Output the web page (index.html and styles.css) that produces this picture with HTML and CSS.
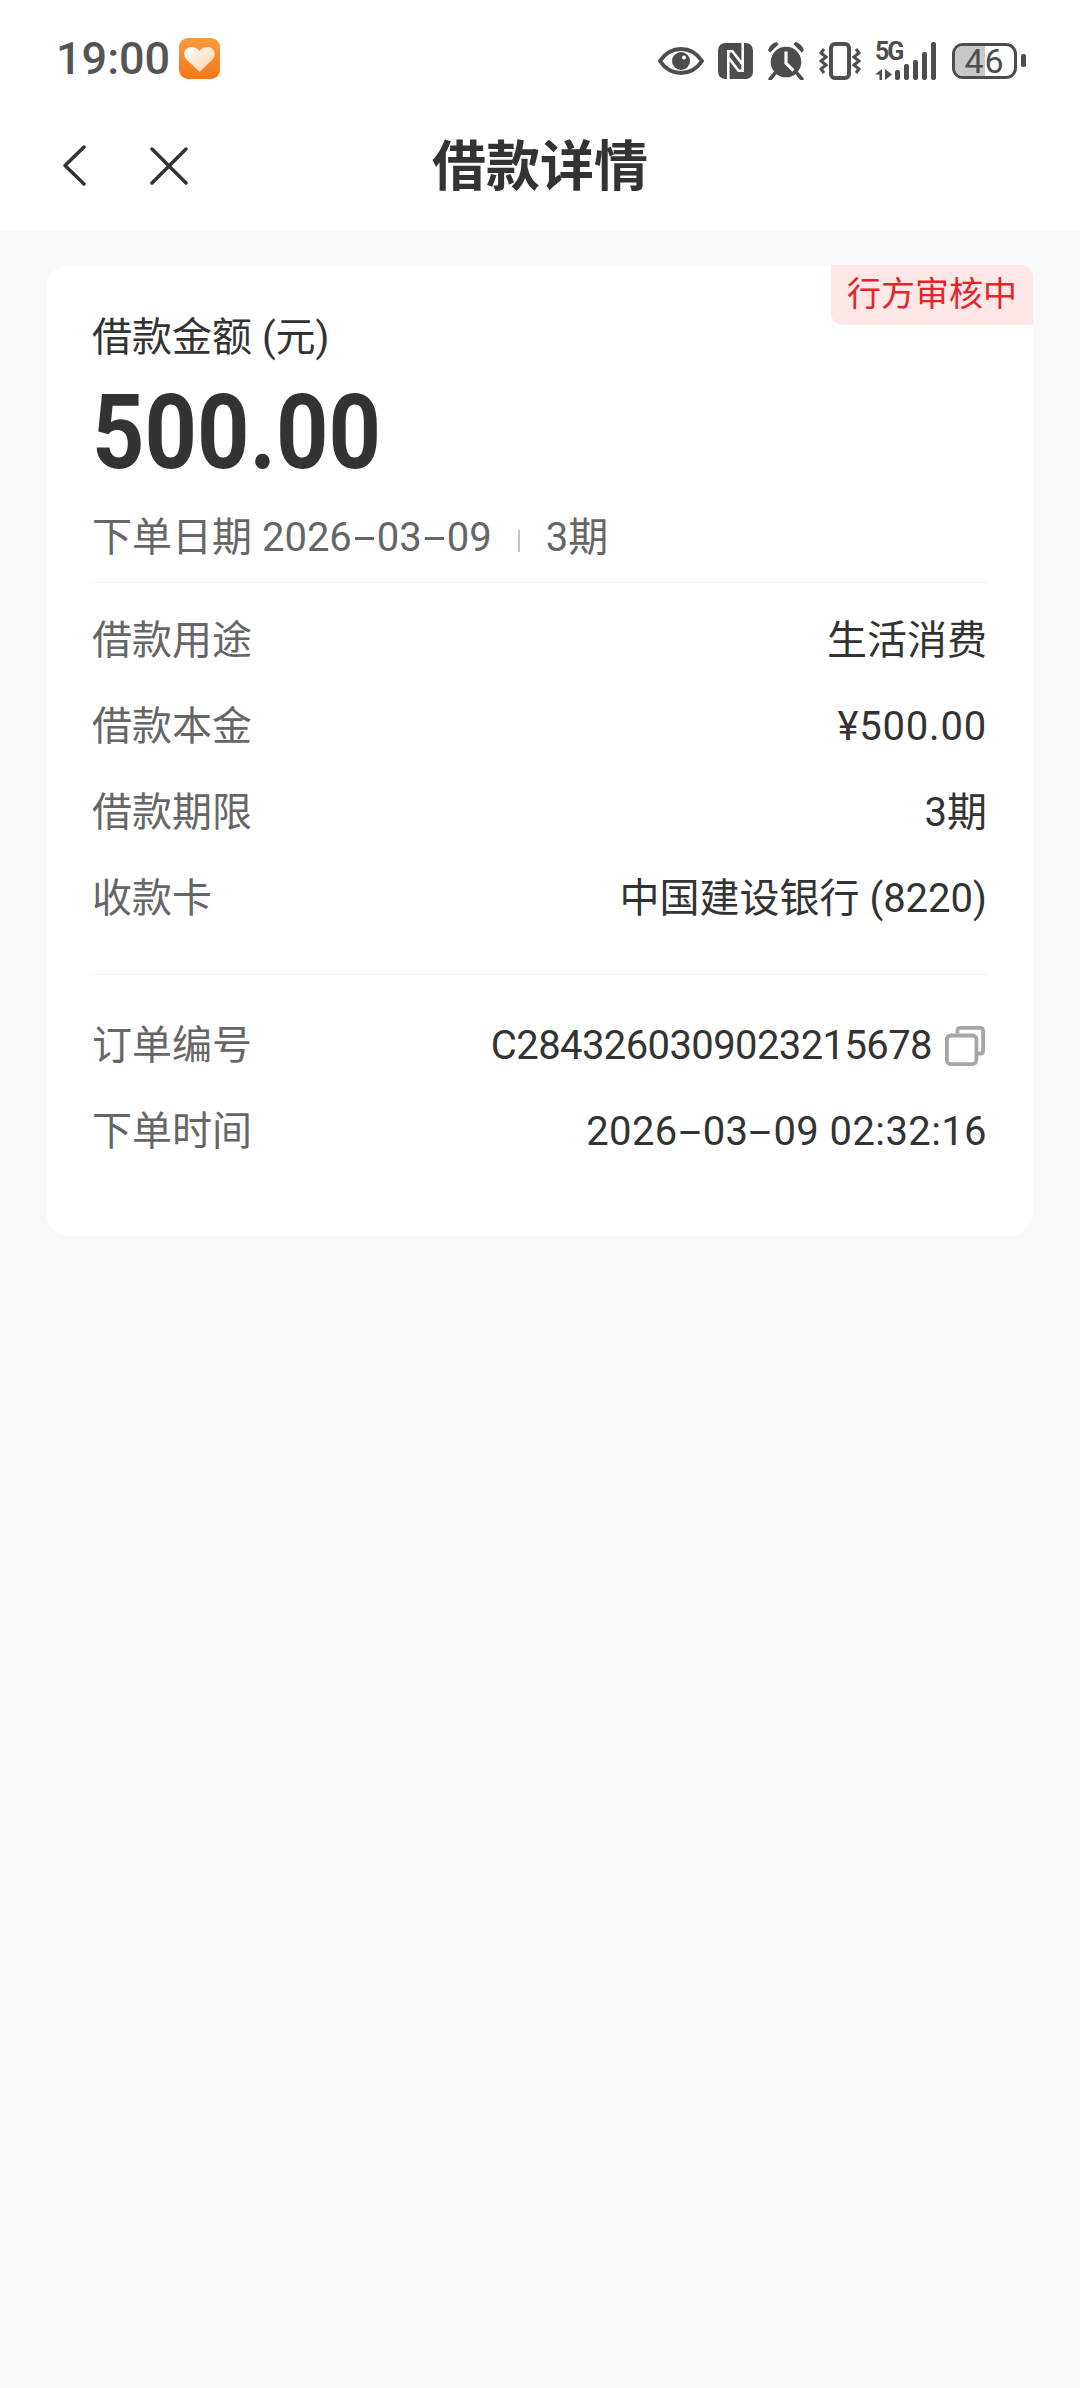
FILE: index.html
```html
<!DOCTYPE html>
<html lang="zh-CN">
<head>
  <meta charset="UTF-8">
  <title>借款详情</title>
  <link rel="stylesheet" href="styles.css">
</head>
<body>
  <div class="status-bar">
    <div class="status-left">
      <span class="time">19:00</span>
      <svg class="app-icon" width="42" height="42" viewBox="0 0 42 42">
        <defs>
          <linearGradient id="orange" x1="0" y1="0" x2="0" y2="1">
            <stop offset="0" stop-color="#fb9a3c"/>
            <stop offset="1" stop-color="#f9761a"/>
          </linearGradient>
          <linearGradient id="heart" x1="0" y1="0" x2="1" y2="1">
            <stop offset="0" stop-color="#fff"/>
            <stop offset="1" stop-color="#fbcfa4"/>
          </linearGradient>
        </defs>
        <rect width="41" height="41" rx="9" fill="url(#orange)"/>
        <path d="M20.500 34 L7 21 C3 16 6 9 12.500 9 C16 9 18.500 10.500 20.500 13 C22.500 10.500 25 9 28.500 9 C35 9 38 16 34 21 Z" fill="url(#heart)"/>
      </svg>
    </div>
    <div class="status-right">
      <svg width="46" height="30" viewBox="0 0 46 30">
        <path d="M2 15 C8 6 15 3 23 3 C31 3 38 6 44 15 C38 24 31 27 23 27 C15 27 8 24 2 15 Z" fill="none" stroke="#4d4d4d" stroke-width="4"/>
        <circle cx="23" cy="15" r="9" fill="#4d4d4d"/>
        <circle cx="26" cy="11.500" r="2" fill="#fff"/>
      </svg>
      <svg width="35" height="36" viewBox="0 0 34 35">
        <rect width="34" height="35" rx="7" fill="#4d4d4d"/>
        <path d="M10 35 V8 H14 L24 21 M24 0 V27 H20 L10 14" fill="none" stroke="#fff" stroke-width="2.500"/>
      </svg>
      <svg width="38" height="39" viewBox="0 0 36 37">
        <circle cx="18" cy="20" r="14.500" fill="#4d4d4d"/>
        <path d="M18 10 V21 L25 28" fill="none" stroke="#fff" stroke-width="3"/>
        <path d="M1 9 C2 5 5 2 9 1 L11 3 L3 11 Z M35 9 C34 5 31 2 27 1 L25 3 L33 11 Z" fill="#4d4d4d"/>
        <path d="M8 30 L3 36 M28 30 L33 36" stroke="#4d4d4d" stroke-width="3.500" stroke-linecap="round"/>
      </svg>
      <svg width="42" height="38" viewBox="0 0 42 38">
        <rect x="12" y="2" width="18" height="34" rx="4" fill="none" stroke="#4d4d4d" stroke-width="4"/>
        <path d="M5 7 L2 11 L7 15 L2 19 L7 23 L2 27 L5 31" fill="none" stroke="#4d4d4d" stroke-width="3"/>
        <path d="M37 7 L40 11 L35 15 L40 19 L35 23 L40 27 L37 31" fill="none" stroke="#4d4d4d" stroke-width="3"/>
      </svg>
      <div class="signal">
        <div class="net">
          <span class="net-label">5G</span>
          <svg width="18" height="11" viewBox="0 0 18 11">
            <path d="M7 0 V11 H4.500 V5.500 H0 Z M10 0 L17 5.500 L10 11 Z" fill="#4d4d4d"/>
          </svg>
        </div>
        <div class="bars">
          <i class="bar b0"></i>
          <i class="bar b1"></i>
          <i class="bar b2"></i>
          <i class="bar b3"></i>
          <i class="bar b4"></i>
        </div>
      </div>
      <div class="battery">
        <div class="battery-body">
          <div class="battery-fill"></div>
          <span class="battery-num">46</span>
        </div>
        <div class="battery-cap"></div>
      </div>
    </div>
  </div>

  <div class="nav-bar">
    <div class="nav-icons">
      <svg width="24" height="42" viewBox="0 0 24 42">
        <path d="M22 2 L3 20.500 L22 39" fill="none" stroke="#333" stroke-width="3.500" stroke-linecap="round" stroke-linejoin="round"/>
      </svg>
      <svg width="38" height="38" viewBox="0 0 38 38">
        <path d="M2 2 L36 36 M36 2 L2 36" fill="none" stroke="#333" stroke-width="3.500" stroke-linecap="round"/>
      </svg>
    </div>
    <h1 class="nav-title">借款详情</h1>
  </div>

  <div class="strip"></div>

  <div class="card">
    <div class="badge">行方审核中</div>
    <div class="amount-label">借款金额 (元)</div>
    <div class="amount">500.00</div>
    <div class="order-meta">
      <span>下单日期 2026<span class="dash">-</span>03<span class="dash">-</span>09</span>
      <i class="meta-sep"></i>
      <span>3期</span>
    </div>

    <div class="group first">
      <div class="row"><span class="key">借款用途</span><span class="val">生活消费</span></div>
      <div class="row"><span class="key">借款本金</span><span class="val price">¥500.00</span></div>
      <div class="row"><span class="key">借款期限</span><span class="val">3期</span></div>
      <div class="row"><span class="key">收款卡</span><span class="val">中国建设银行 (8220)</span></div>
    </div>

    <div class="group second">
      <div class="row">
        <span class="key">订单编号</span>
        <span class="val">
          <span class="order-no">C2843260309023215678</span>
          <svg class="copy" width="40" height="40" viewBox="0 0 42 42">
            <path d="M13 8 V5 C13 3 14 2 16 2 H37 C39 2 40 3 40 5 V26 C40 28 39 29 37 29 H33" fill="none" stroke="#a6a6a6" stroke-width="4"/>
            <rect x="2" y="10" width="31" height="30" rx="4" fill="none" stroke="#a6a6a6" stroke-width="4"/>
          </svg>
        </span>
      </div>
      <div class="row">
        <span class="key">下单时间</span>
        <span class="val"><span class="stamp">2026<span class="dash">-</span>03<span class="dash">-</span>09 02:32:16</span></span>
      </div>
    </div>
  </div>
</body>
</html>
```

FILE: styles.css
```css
body {
  margin: 0;
  height: 2388px;
  overflow: hidden;
  background: #f9f9fa;
  font-family: Roboto, "Noto Sans CJK SC", sans-serif;
  color: #333;
}
.status-bar {
  height: 80px;
  padding: 0 54px 0 56px;
  background: #fff;
  display: flex;
  justify-content: space-between;
  align-items: flex-end;
}
.status-left {
  display: flex;
  align-items: center;
  gap: 9px;
}
.time {
  font-size: 45px;
  line-height: 42px;
  font-weight: 500;
  color: #555;
}
.status-right {
  display: flex;
  align-items: center;
  gap: 14px;
}
.signal {
  display: flex;
  align-items: flex-end;
  height: 38px;
}
.net {
  display: flex;
  flex-direction: column;
  justify-content: space-between;
  height: 38px;
  width: 20px;
}
.net-label {
  font-size: 25px;
  line-height: 20px;
  font-weight: 700;
  letter-spacing: -2px;
  white-space: nowrap;
  color: #4d4d4d;
}
.bars {
  display: flex;
  align-items: flex-end;
  gap: 4px;
}
.bar {
  width: 5px;
  background: #4d4d4d;
  border-radius: 2px;
}
.b0 { height: 10px; }
.b1 { height: 16px; }
.b2 { height: 20px; }
.b3 { height: 28px; }
.b4 { height: 38px; }
.battery {
  display: flex;
  align-items: center;
  gap: 4px;
  margin-left: 2px;
}
.battery-body {
  position: relative;
  box-sizing: border-box;
  width: 65px;
  height: 36px;
  border: 3px solid #4d4d4d;
  border-radius: 11px;
  display: flex;
  align-items: center;
  justify-content: center;
}
.battery-fill {
  position: absolute;
  left: 0;
  top: 0;
  bottom: 0;
  width: 50%;
  background: #c8c8c8;
  border-radius: 8px 0 0 8px;
}
.battery-num {
  position: relative;
  font-size: 34px;
  line-height: 36px;
  letter-spacing: 1px;
  color: #4d4d4d;
}
.battery-cap {
  width: 5px;
  height: 13px;
  background: #4d4d4d;
  border-radius: 2px;
}
.nav-bar {
  position: relative;
  box-sizing: border-box;
  height: 150px;
  padding-top: 15px;
  background: #fff;
  display: flex;
  align-items: center;
  justify-content: center;
}
.nav-icons {
  position: absolute;
  left: 62px;
  top: 65px;
  display: flex;
  align-items: center;
  gap: 64px;
}
.nav-title {
  margin: 0;
  font-size: 54px;
  font-weight: 700;
  color: #333;
}
.strip {
  height: 35px;
  background: linear-gradient(#f8fafe, #f8f9fb);
}
.card {
  position: relative;
  margin: 0 47px 0 46px;
  height: 971px;
  box-sizing: border-box;
  padding: 46px 46px 0;
  background: #fff;
  border-radius: 24px;
}
.badge {
  position: absolute;
  top: 0;
  right: 0;
  width: 202px;
  height: 60px;
  line-height: 59px;
  text-align: center;
  font-size: 34px;
  color: #e5242a;
  background: #fde7e7;
  border-radius: 0 12px 0 12px;
}
.amount-label {
  font-size: 40px;
  line-height: 54px;
}
.amount {
  font-size: 104px;
  line-height: 120px;
  font-weight: 700;
  transform: scaleX(0.88);
  transform-origin: left center;
  margin-top: 8px;
}
.order-meta {
  display: flex;
  align-items: center;
  margin-top: 18px;
  font-size: 40px;
  line-height: 54px;
  color: #666;
}
.meta-sep {
  width: 2px;
  height: 22px;
  margin: 6px 26px 0;
  background: #c4c4c4;
}
.dash {
  display: inline-block;
  width: 25px;
  text-align: center;
  transform: scaleX(2);
}
.group {
  padding: 15px 0 32px;
  border-top: 1px solid #f0f0f0;
}
.group.first {
  margin-top: 17px;
}
.group.second {
  padding-top: 28px;
}
.row {
  display: flex;
  justify-content: space-between;
  align-items: baseline;
  height: 86px;
  line-height: 86px;
  font-size: 40px;
}
.key {
  color: #666;
}
.val {
  display: flex;
  align-items: center;
  gap: 13px;
  color: #333;
}
.price {
  letter-spacing: 0.8px;
}
.order-no {
  letter-spacing: -0.6px;
}
.stamp {
  letter-spacing: 0.4px;
}
.copy {
  flex: none;
  margin-right: 2px;
}
```
